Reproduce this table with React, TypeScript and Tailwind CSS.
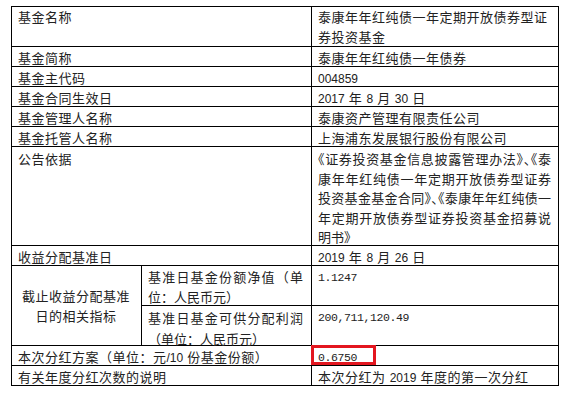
import type { ReactNode } from "react";

function Cell({ children, className = "" }: { children?: ReactNode; className?: string }) {
  return (
    <div className={`relative border-r border-b border-black pl-[6px] pr-[7px] pt-[2px] leading-[19.5px] ${className}`}>
      {children}
    </div>
  );
}

// plain digits (Arial-like) and fixed-width figures
function N({ children }: { children: ReactNode }) {
  return <span className="text-[12px] tracking-normal">{children}</span>;
}
function M({ children }: { children: ReactNode }) {
  return (
    <span className="align-[1px] font-['Liberation_Mono',monospace] text-[11.5px] tracking-[-0.4px]">{children}</span>
  );
}

// one justified line of a hand-broken paragraph
function Line({ children, last = false, halt = false }: { children: ReactNode; last?: boolean; halt?: boolean }) {
  return (
    <div
      className={`whitespace-nowrap tracking-normal ${halt ? "[font-feature-settings:'halt']" : ""} ${
        last ? "tracking-[0.5px]" : "text-justify [text-align-last:justify]"
      }`}
    >
      {children}
    </div>
  );
}

export default function App() {
  return (
    <div className="min-h-screen bg-white pl-[11px] pt-[6px] font-['Liberation_Sans','Noto_Sans_CJK_SC',sans-serif] text-[13px] tracking-[0.5px] text-[#222]">
      <div className="grid w-[548px] grid-cols-[130px_170px_247px] grid-rows-[40px_20px_20px_20px_20px_20px_99px_20px_40px_40px_20px_20px] border-t border-l border-black">
        <Cell className="col-span-2 pt-px">基金名称</Cell>
        <Cell className="pt-px leading-[20px]">
          <div className="whitespace-nowrap">泰康年年红纯债一年定期开放债券型证</div>
          <div>券投资基金</div>
        </Cell>

        <Cell className="col-span-2">基金简称</Cell>
        <Cell>泰康年年红纯债一年债券</Cell>

        <Cell className="col-span-2">基金主代码</Cell>
        <Cell>
          <N>004859</N>
        </Cell>

        <Cell className="col-span-2">基金合同生效日</Cell>
        <Cell>
          <N>2017</N> 年 <N>8</N> 月 <N>30</N> 日
        </Cell>

        <Cell className="col-span-2">基金管理人名称</Cell>
        <Cell>泰康资产管理有限责任公司</Cell>

        <Cell className="col-span-2">基金托管人名称</Cell>
        <Cell>上海浦东发展银行股份有限公司</Cell>

        <Cell className="col-span-2 pt-[3px]">公告依据</Cell>
        <Cell className="pt-[3px]">
          <Line halt>《证券投资基金信息披露管理办法》、《泰</Line>
          <Line>康年年红纯债一年定期开放债券型证券</Line>
          <Line halt>投资基金基金合同》、《泰康年年红纯债一</Line>
          <Line>年定期开放债券型证券投资基金招募说</Line>
          <Line last halt>明书》</Line>
        </Cell>

        <Cell className="col-span-2">收益分配基准日</Cell>
        <Cell>
          <N>2019</N> 年 <N>8</N> 月 <N>26</N> 日
        </Cell>

        <Cell className="row-span-2 flex flex-col items-center justify-center pl-0 pr-0 pt-0 leading-[17px]">
          <div>截止收益分配基准</div>
          <div>日的相关指标</div>
        </Cell>
        <Cell className="pr-[8px]">
          <Line>基准日基金份额净值（单</Line>
          <Line last>位：人民币元）</Line>
        </Cell>
        <Cell>
          <M>1.1247</M>
        </Cell>

        <Cell className="pr-[8px] leading-[21px]">
          <Line>基准日基金可供分配利润</Line>
          <Line last>（单位：人民币元）</Line>
        </Cell>
        <Cell>
          <M>200,711,120.49</M>
        </Cell>

        <Cell className="col-span-2">
          本次分红方案（单位：元<N>/10</N> 份基金份额）
        </Cell>
        <Cell>
          <M>0.6750</M>
          <span className="absolute -top-px -left-px h-[20px] w-[65px] border-[3px] border-[#e3161f]" />
        </Cell>

        <Cell className="col-span-2">有关年度分红次数的说明</Cell>
        <Cell>
          本次分红为 <N>2019</N> 年度的第一次分红
        </Cell>
      </div>
    </div>
  );
}
